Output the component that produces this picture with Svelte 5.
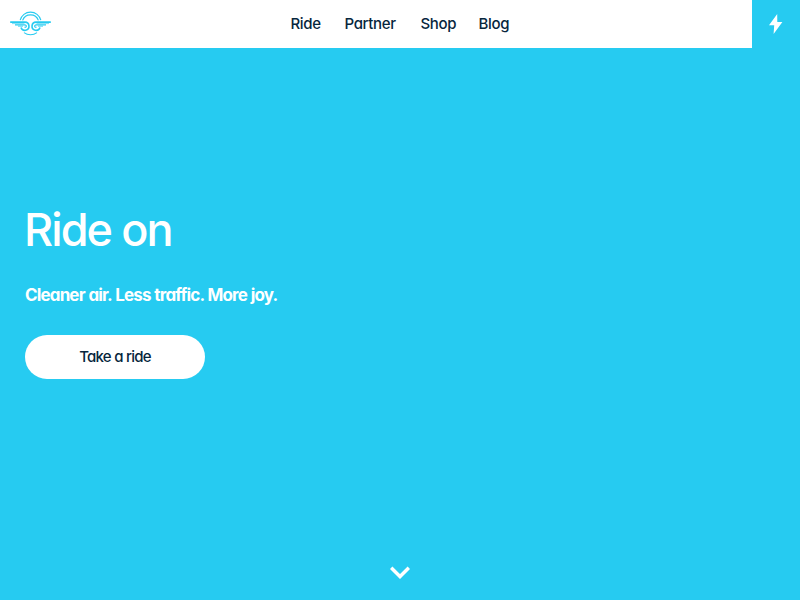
<script lang="ts">
  const links = [
    { label: "Ride", width: 30 },
    { label: "Partner", width: 52 },
    { label: "Shop", width: 34 },
    { label: "Blog", width: 31 },
  ];
</script>

<svelte:head><title>Ride on</title></svelte:head>

<div class="page">
  <header>
    <a class="logo" href="#home" aria-label="Home">
      <svg width="42" height="26" viewBox="0 0 42 26" fill="none" stroke="#26cbf1">
        <path d="M10.2 9.2a10.6 10.6 0 0 1 20.6 0M12.6 9.4a8.4 8.4 0 0 1 15.8 0" stroke-width="1.2" />
        <path d="M14 21.6a10.8 10.8 0 0 0 13 0" stroke-width="1.1" />
        {@render wing()}
        <g transform="translate(41 0) scale(-1 1)">{@render wing()}</g>
      </svg>
    </a>
    <nav>
      {#each links as link}
        <a href="#{link.label.toLowerCase()}" style="width: {link.width}px">{link.label}</a>
      {/each}
    </nav>
    <button class="bolt" aria-label="Charge">
      <svg width="14" height="20" viewBox="0 0 14 20" fill="#fff">
        <path d="M8.2 0 0 11.2h5.2L4.6 20 13.4 8H8.3z" />
      </svg>
    </button>
  </header>

  <main>
    <h1>Ride on</h1>
    <p>Cleaner air. Less traffic. More joy.</p>
    <a class="cta" href="#ride">Take a ride</a>
  </main>

  <button class="scroll" aria-label="Scroll down">
    <svg width="20" height="13" viewBox="0 0 20 13" fill="none" stroke="#fff" stroke-width="3.4">
      <path d="m1.2 1.7 8.8 8.8 8.8-8.8" />
    </svg>
  </button>
</div>

{#snippet wing()}
  <path d="M.2 11.1H15a4.1 4.1 0 1 1-4 5.4" stroke-width="1.6" />
  <path d="M2 12.5h12.5" stroke-width="1.2" stroke-opacity=".55" />
  <path d="M5 13.9h9.6q2 .2 1.7 1.5t-1.8.6" stroke-width="1.2" />
  <path d="M8 15.2h5" stroke-width="1.4" stroke-opacity=".6" />
{/snippet}

<style>
  :global(body) {
    margin: 0;
  }
  .page {
    height: 100vh;
    display: flex;
    flex-direction: column;
    background: #26cbf1;
    color: #fff;
    font-family: Inter, "Liberation Sans", sans-serif;
    font-feature-settings: "cv11";
  }
  header {
    height: 48px;
    flex: none;
    display: grid;
    grid-template-columns: 1fr auto 1fr;
    align-items: center;
    background: #fff;
  }
  .logo {
    display: flex;
    padding-left: 10px;
  }
  nav {
    display: flex;
    gap: 24px;
  }
  nav a {
    color: #06263d;
    font-size: 15px;
    font-weight: 500;
    line-height: 20px;
    letter-spacing: -0.35px;
    white-space: nowrap;
    text-decoration: none;
  }
  button {
    border: none;
    padding: 0;
    cursor: pointer;
  }
  .bolt {
    width: 48px;
    height: 48px;
    justify-self: end;
    display: grid;
    place-items: center;
    background: #26cbf1;
  }
  main {
    flex: 1;
    display: flex;
    flex-direction: column;
    align-items: flex-start;
    padding: 153px 25px 0;
  }
  h1 {
    margin: 0 0 0 -1px;
    font-size: 45px;
    font-weight: 500;
    line-height: 57px;
    letter-spacing: -1.9px;
  }
  p {
    margin: 25px 0 28px;
    font-size: 17px;
    font-weight: 700;
    line-height: 24px;
    letter-spacing: -0.85px;
    word-spacing: 0.6px;
  }
  .cta {
    width: 180px;
    height: 44px;
    border-radius: 22px;
    background: #fff;
    color: #06263d;
    font-size: 15px;
    font-weight: 500;
    line-height: 44px;
    letter-spacing: -0.75px;
    text-align: center;
    text-decoration: none;
  }
  .scroll {
    align-self: center;
    display: flex;
    margin-bottom: 21px;
    background: none;
  }
</style>
